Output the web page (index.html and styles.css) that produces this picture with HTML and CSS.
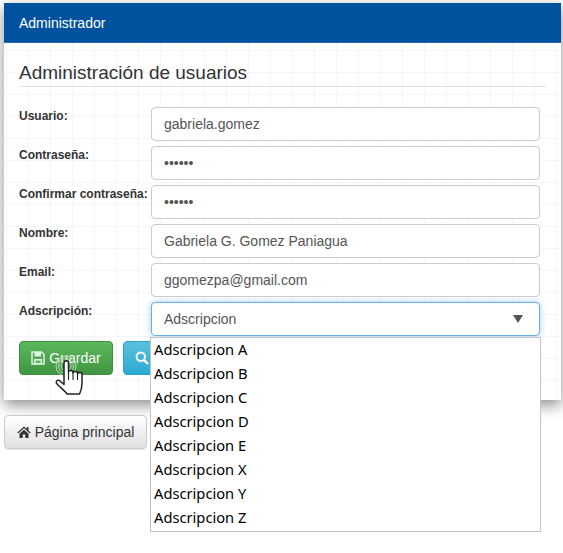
FILE: index.html
```html
<!DOCTYPE html>
<html lang="en">
<head>
  <meta charset="UTF-8">
  <meta name="viewport" content="width=device-width, initial-scale=1.0">
  <title>Administrador</title>
  <link rel="stylesheet" href="styles.css">
</head>
<body>
  <div class="panel">
    <div class="panel-heading">Administrador</div>
    <div class="panel-body">
      <h2>Administración de usuarios</h2>
      <form class="user-form">
        <div class="form-row">
          <label for="usuario">Usuario:</label>
          <input type="text" id="usuario" value="gabriela.gomez">
        </div>
        <div class="form-row">
          <label for="pass">Contraseña:</label>
          <input type="password" id="pass" value="secret">
        </div>
        <div class="form-row">
          <label for="pass2">Confirmar contraseña:</label>
          <input type="password" id="pass2" value="secret">
        </div>
        <div class="form-row">
          <label for="nombre">Nombre:</label>
          <input type="text" id="nombre" value="Gabriela G. Gomez Paniagua">
        </div>
        <div class="form-row">
          <label for="email">Email:</label>
          <input type="text" id="email" value="ggomezpa@gmail.com">
        </div>
        <div class="form-row">
          <label>Adscripción:</label>
          <div class="select-box">
            <span>Adscripcion</span>
            <span class="caret"></span>
            <ul class="select-list">
              <li>Adscripcion A</li>
              <li>Adscripcion B</li>
              <li>Adscripcion C</li>
              <li>Adscripcion D</li>
              <li>Adscripcion E</li>
              <li>Adscripcion X</li>
              <li>Adscripcion Y</li>
              <li>Adscripcion Z</li>
            </ul>
          </div>
        </div>
        <div class="form-actions">
          <button type="button" class="btn btn-success">
            <svg class="icon" viewBox="0 0 14 14"><path fill="none" stroke="#dff3e8" stroke-width="1.500" d="M1 1h9.500L13 3.500V13H1z"/><path fill="#dff3e8" d="M3.500 1h6.500v4.500H3.500zM3 8h8v5H3z"/><path fill="#5cb85c" d="M4.500 9.500h5V12h-5z"/></svg>
            Guardar
          </button>
          <button type="button" class="btn btn-info">
            <svg class="icon" viewBox="0 0 14 14"><circle cx="5.800" cy="5.800" r="4.200" fill="none" stroke="currentColor" stroke-width="2"/><path stroke="currentColor" stroke-width="2.400" d="M9 9l4 4"/></svg>
          </button>
          <svg class="cursor" viewBox="0 0 34 42">
            <g fill="none" stroke="#b5dab5" stroke-width="1">
              <circle cx="13" cy="13" r="10"/><circle cx="13" cy="13" r="7.500"/><circle cx="13" cy="13" r="5"/>
            </g>
            <path fill="#fff" stroke="#222" stroke-width="1.500" stroke-linejoin="round" d="M11 10c0-3 4.500-3 4.500 0v9c0-2 4.500-2 4.500 0v1c0-2 4.500-2 4.500 0v1c0-2 4.500-2 4.500 0v9c0 4-1 8-2.500 11H14c-2-3-6-6-10-10-2-2 0-4.500 2.500-3.500l4.500 4z"/>
            <path fill="none" stroke="#222" stroke-width="1.100" d="M15.500 19v8M20 20v7M24.500 21v6"/>
          </svg>
        </div>
      </form>
    </div>
  </div>
  <button type="button" class="btn btn-default">
    <svg class="icon" viewBox="0 0 14 14"><path fill="currentColor" d="M7 1.500L.3 7.500l.8.9L7 3.200l5.900 5.200.8-.9L11.500 5.500V2H9.700v1.900zM2.500 8.800V13h3.200V9.500h2.600V13h3.200V8.800L7 4.800z"/></svg>
    Página principal
  </button>
</body>
</html>
```

FILE: styles.css
```css
html, body {
  min-height: 100vh;
}
body {
  font-family: "Liberation Sans", Arial, sans-serif;
  font-size: 14px;
  color: #333;
  margin: 0;
  padding: 3px 2px 0 4px;
  box-sizing: border-box;
  background: #fff;
}
.panel {
  background-color: #fff;
  background-image:
    linear-gradient(to right, #f5f5fb 1px, transparent 1px),
    linear-gradient(to bottom, #f5f5fb 1px, transparent 1px);
  background-size: 22px 22px;
  background-position: 2px 3px;
  height: 397px;
  box-shadow: 0 5px 14px rgba(0, 0, 0, 0.45);
}
.panel-heading {
  background: #00529f;
  color: #fff;
  height: 40px;
  line-height: 40px;
  padding-left: 15px;
  border-bottom: 1px solid #2a6cab;
  box-sizing: border-box;
}
.panel-body {
  padding: 18px 15px 0;
}
h2 {
  font-size: 19px;
  font-weight: 400;
  line-height: 24px;
  margin: 0 0 20px;
  padding-bottom: 1px;
  border-bottom: 1px solid #e2e2e2;
}
.form-row {
  display: flex;
  height: 34px;
  margin-bottom: 5px;
}
.form-row label {
  width: 132px;
  font-size: 12px;
  font-weight: 700;
  line-height: 19px;
  white-space: nowrap;
}
.form-row input, .select-box {
  width: 389px;
  height: 34px;
  box-sizing: border-box;
  padding: 6px 12px;
  font-family: inherit;
  font-size: 14px;
  color: #555;
  background: #fff;
  border: 1px solid #ccc;
  border-radius: 4px;
}
.select-box {
  position: relative;
  display: flex;
  justify-content: space-between;
  align-items: center;
  border-color: #66afe9;
  box-shadow: 0 0 6px rgba(102, 175, 233, 0.6);
}
.caret {
  width: 0;
  height: 0;
  margin-right: 4px;
  border-left: 5px solid transparent;
  border-right: 5px solid transparent;
  border-top: 8px solid #555;
}
.select-list {
  position: absolute;
  top: 34px;
  left: -2px;
  z-index: 2;
  width: 391px;
  box-sizing: border-box;
  margin: 0;
  padding: 0 0 1px 3px;
  list-style: none;
  background: #fff;
  border: 1px solid #c4c4c4;
  font-family: "Noto Sans", sans-serif;
  font-size: 14.7px;
  color: #000;
}
.select-list li {
  height: 24px;
  line-height: 23px;
}
.form-actions {
  position: relative;
  display: flex;
  gap: 10px;
}
.btn {
  display: inline-flex;
  align-items: center;
  justify-content: center;
  gap: 4px;
  height: 34px;
  box-sizing: border-box;
  padding: 0 8px;
  font-family: inherit;
  font-size: 14px;
  white-space: nowrap;
  border-radius: 4px;
  border: 1px solid transparent;
}
.btn-success {
  width: 94px;
  color: #fff;
  background: linear-gradient(#5cb85c, #419641);
  border-color: #3e8f3e;
}
.btn-info {
  width: 90px;
  justify-content: flex-start;
  padding-left: 11px;
  color: #fff;
  background: linear-gradient(#5bc0de, #2aabd2);
  border-color: #28a4c9;
}
.btn-default {
  width: 143px;
  margin-top: 15px;
  color: #333;
  background: linear-gradient(#fff, #e0e0e0);
  border-color: #ccc;
  box-shadow: 0 1px 1px rgba(0, 0, 0, 0.1);
}
.icon {
  width: 14px;
  height: 14px;
}
.cursor {
  position: absolute;
  left: 34px;
  top: 12px;
  width: 34px;
  height: 42px;
}
```
